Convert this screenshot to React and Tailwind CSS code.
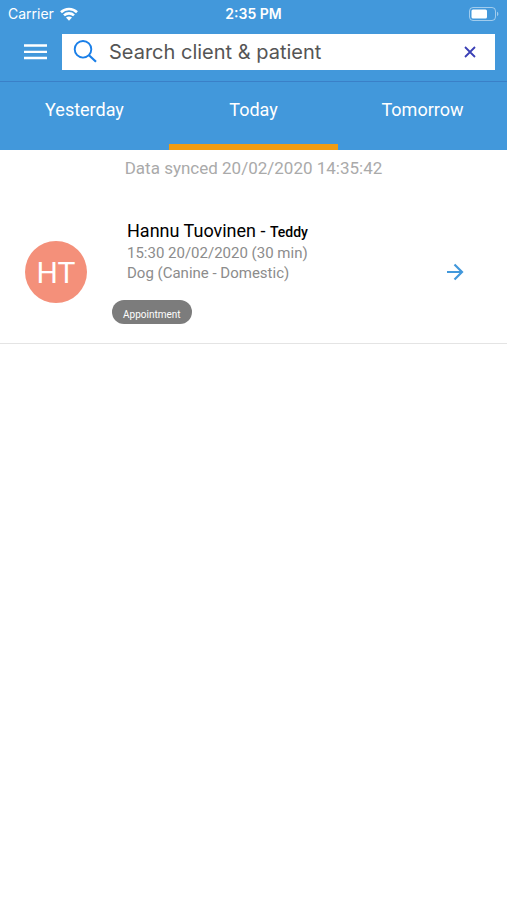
import { useState } from 'react';

const days = ['Yesterday', 'Today', 'Tomorrow'];

const appointments = [
  {
    initials: 'HT',
    client: 'Hannu Tuovinen',
    patient: 'Teddy',
    time: '15:30 20/02/2020 (30 min)',
    species: 'Dog (Canine - Domestic)',
    type: 'Appointment'
  }
];

function StatusBar() {
  return (
    <div className="grid grid-cols-3 items-center h-7 px-2 text-[14px] leading-4">
      <div className="flex items-center gap-[6px]">
        <span>Carrier</span>
        <svg width="18" height="14" viewBox="0 0 18 14" fill="none" stroke="currentColor" strokeWidth="2.6" aria-hidden="true">
          <path d="M1 5.2C5.4 .9 12.6 .9 17 5.2" />
          <path d="M4 8.4c2.8-2.7 7.2-2.7 10 0" />
          <path d="M6 10.6c1.7-1.6 4.3-1.6 6 0L9 13.8z" fill="currentColor" stroke="none" />
        </svg>
      </div>
      <span className="text-center font-semibold">2:35 PM</span>
      <svg className="justify-self-end" width="30" height="14" viewBox="0 0 30 14" fill="none" aria-hidden="true">
        <rect x=".5" y=".5" width="26" height="13" rx="3.5" stroke="currentColor" strokeOpacity=".5" />
        <rect x="2.5" y="2.5" width="15.5" height="9" rx="1.5" fill="currentColor" />
        <path d="M28 4.8c1.8.6 1.8 3.8 0 4.4z" fill="currentColor" fillOpacity=".5" />
      </svg>
    </div>
  );
}

function SearchBar() {
  const [query, setQuery] = useState('');

  return (
    <div className="flex items-center pl-6 pr-3 pt-[6px] pb-[11px]">
      <button type="button" aria-label="Menu" className="mr-[15px]">
        <svg width="23" height="16" viewBox="0 0 23 16" stroke="currentColor" strokeWidth="2.3" aria-hidden="true">
          <path d="M0 1.5h23M0 7.8h23M0 14h23" />
        </svg>
      </button>
      <div className="flex flex-1 min-w-0 items-center h-9 bg-white pl-[11px] pr-[18px]">
        <svg className="shrink-0" width="24" height="24" viewBox="0 0 24 24" fill="none" stroke="#1a7fe8" strokeWidth="1.9" aria-hidden="true">
          <circle cx="10" cy="9.3" r="8.3" />
          <path d="M16 15.3l7 6.5" strokeWidth="2.2" />
        </svg>
        <input
          type="text"
          aria-label="Search client & patient"
          placeholder="Search client & patient"
          value={query}
          onChange={(e) => setQuery(e.target.value)}
          className="flex-1 min-w-0 ml-3 h-full text-[20px] text-[#555555] placeholder:text-[#555555] outline-none"
        />
        <button type="button" aria-label="Clear" onClick={() => setQuery('')} className="text-[#3a3fb5]">
          <svg width="14" height="14" viewBox="0 0 14 14" stroke="currentColor" strokeWidth="1.8" aria-hidden="true">
            <path d="M2 2l10 10M12 2L2 12" />
          </svg>
        </button>
      </div>
    </div>
  );
}

function AppointmentRow({ item }) {
  return (
    <li className="flex items-center pl-[25px] pr-[43px] pt-[38px] pb-[19px] border-b border-[#e4e4e4]">
      <div className="shrink-0 w-[62px] h-[62px] rounded-full bg-[#f4907a] text-white text-[30px] flex items-center justify-center">
        {item.initials}
      </div>
      <div className="flex-1 min-w-0 ml-[25px]">
        <div className="pl-[15px]">
          <h2 className="text-[18px] leading-[22px] text-black">
            {item.client} - <span className="text-[14px] font-medium">{item.patient}</span>
          </h2>
          <p className="text-[15px] leading-5 text-[#8c8c8c]">{item.time}</p>
          <p className="text-[15px] leading-5 text-[#8c8c8c]">{item.species}</p>
        </div>
        <span className="inline-flex items-center h-6 mt-[17px] px-[11px] pt-1 rounded-full bg-[#7c7c7c] text-white text-[10px] align-top">
          {item.type}
        </span>
      </div>
      <button type="button" aria-label="Open appointment" className="text-[#4298db]">
        <svg width="18" height="18" viewBox="0 0 18 18" fill="none" stroke="currentColor" strokeWidth="2.2" aria-hidden="true">
          <path d="M1 9h15M8.5 1.5L16 9L8.5 16.5" />
        </svg>
      </button>
    </li>
  );
}

export default function App() {
  const [activeDay, setActiveDay] = useState('Today');

  return (
    <div className="min-h-screen bg-white font-['Roboto',sans-serif]">
      <header className="bg-[#4298db] text-white font-['Inter',sans-serif]">
        <StatusBar />
        <SearchBar />
        <nav className="grid grid-cols-3 border-t border-[#3a80c8]">
          {days.map((day) => (
            <button
              key={day}
              type="button"
              onClick={() => setActiveDay(day)}
              className={`h-[68px] pb-2 text-[18px] border-b-6 font-['Roboto',sans-serif] ${
                activeDay === day ? 'border-[#f09c13]' : 'border-transparent'
              }`}
            >
              {day}
            </button>
          ))}
        </nav>
      </header>

      <main>
        <p className="pt-2 text-center text-[17px] leading-5 text-[#aaaaaa]">Data synced 20/02/2020 14:35:42</p>
        <ul className="mt-1">
          {appointments.map((item) => (
            <AppointmentRow key={item.client} item={item} />
          ))}
        </ul>
      </main>
    </div>
  );
}
